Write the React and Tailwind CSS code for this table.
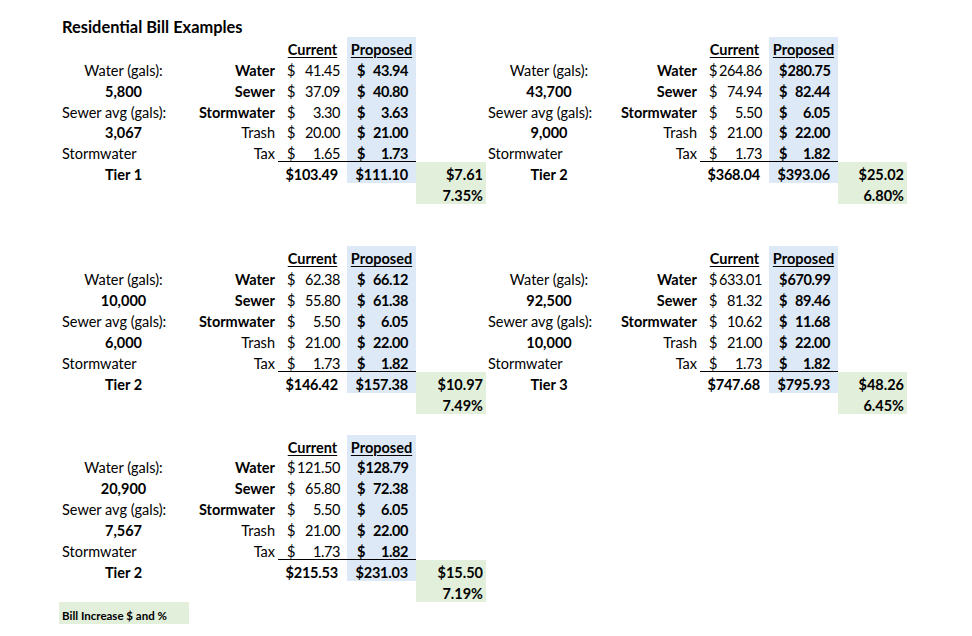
const blocks = [
  {
    water: '5,800',
    sewerAvg: '3,067',
    tier: 'Tier 1',
    rows: [
      ['41.45', '43.94'],
      ['37.09', '40.80'],
      ['3.30', '3.63'],
      ['20.00', '21.00'],
      ['1.65', '1.73'],
    ],
    total: ['$103.49', '$111.10'],
    diff: '$7.61',
    pct: '7.35%',
  },
  {
    water: '43,700',
    sewerAvg: '9,000',
    tier: 'Tier 2',
    rows: [
      ['264.86', '280.75'],
      ['74.94', '82.44'],
      ['5.50', '6.05'],
      ['21.00', '22.00'],
      ['1.73', '1.82'],
    ],
    total: ['$368.04', '$393.06'],
    diff: '$25.02',
    pct: '6.80%',
  },
  {
    water: '10,000',
    sewerAvg: '6,000',
    tier: 'Tier 2',
    rows: [
      ['62.38', '66.12'],
      ['55.80', '61.38'],
      ['5.50', '6.05'],
      ['21.00', '22.00'],
      ['1.73', '1.82'],
    ],
    total: ['$146.42', '$157.38'],
    diff: '$10.97',
    pct: '7.49%',
  },
  {
    water: '92,500',
    sewerAvg: '10,000',
    tier: 'Tier 3',
    rows: [
      ['633.01', '670.99'],
      ['81.32', '89.46'],
      ['10.62', '11.68'],
      ['21.00', '22.00'],
      ['1.73', '1.82'],
    ],
    total: ['$747.68', '$795.93'],
    diff: '$48.26',
    pct: '6.45%',
  },
  {
    water: '20,900',
    sewerAvg: '7,567',
    tier: 'Tier 2',
    rows: [
      ['121.50', '128.79'],
      ['65.80', '72.38'],
      ['5.50', '6.05'],
      ['21.00', '22.00'],
      ['1.73', '1.82'],
    ],
    total: ['$215.53', '$231.03'],
    diff: '$15.50',
    pct: '7.19%',
  },
];

const charges = [
  { label: 'Water', bold: true },
  { label: 'Sewer', bold: true },
  { label: 'Stormwater', bold: true },
  { label: 'Trash', bold: false },
  { label: 'Tax', bold: false },
];

// one spreadsheet cell, text sits near the bottom like Excel
function Cell({ className = '', children }) {
  return <div className={`h-[20.95px] leading-[26px] whitespace-nowrap ${className}`}>{children}</div>;
}

function Money({ value, className = '' }) {
  return (
    <Cell className={`flex justify-between ${className}`}>
      <span>$</span>
      <span className="tracking-[-0.4px]">{value}</span>
    </Cell>
  );
}

function Block({ data, right }) {
  const labelA = right ? 'w-[126px]' : 'w-[127px]';
  const labelB = right ? 'w-[88px]' : 'w-[91px]';
  const pctW = right ? 'w-[69px]' : 'w-[70px]';

  const colA = [
    <Cell key="h" />,
    <Cell key="w" className="text-center">Water (gals):</Cell>,
    <Cell key="wv" className="text-center font-bold">{data.water}</Cell>,
    <Cell key="s" className="pl-[2px]">Sewer avg (gals):</Cell>,
    <Cell key="sv" className="text-center font-bold">{data.sewerAvg}</Cell>,
    <Cell key="st" className="pl-[2px]">Stormwater</Cell>,
    <Cell key="t" className="text-center font-bold">{data.tier}</Cell>,
    <Cell key="p" />,
  ];

  return (
    <div className="flex">
      <div className={labelA}>{colA}</div>
      <div className={labelB}>
        <Cell />
        {charges.map((c) => (
          <Cell key={c.label} className={`text-right pr-[3px] ${c.bold ? 'font-bold' : ''}`}>
            {c.label}
          </Cell>
        ))}
        <Cell />
        <Cell />
      </div>
      <div className="w-[69px]">
        <Cell className="text-center font-bold">
          <span className="underline underline-offset-[2px]">Current</span>
        </Cell>
        {data.rows.map((r, i) => (
          <Money key={i} value={r[0]} className={`pl-[9px] pr-[7px] ${i === 4 ? 'border-b border-black' : ''}`} />
        ))}
        <Cell className="text-right font-bold pr-[9px] tracking-[-0.2px]">{data.total[0]}</Cell>
        <Cell />
      </div>
      <div className="w-[69px]">
        <Cell className="text-center font-bold bg-[#dde9f6]">
          <span className="underline underline-offset-[2px]">Proposed</span>
        </Cell>
        {data.rows.map((r, i) => (
          <Money
            key={i}
            value={r[1]}
            className={`bg-[#dde9f6] font-bold pl-[10px] pr-[8px] ${i === 4 ? 'border-b border-black' : ''}`}
          />
        ))}
        <Cell className="text-right font-bold pr-[8px] tracking-[-0.2px] bg-[#dde9f6]">{data.total[1]}</Cell>
        <Cell />
      </div>
      <div className={pctW}>
        <Cell />
        <Cell />
        <Cell />
        <Cell />
        <Cell />
        <Cell />
        <Cell className="text-right font-bold pr-[3px] bg-[#e2efda]">{data.diff}</Cell>
        <Cell className="text-right font-bold pr-[3px] bg-[#e2efda]">{data.pct}</Cell>
      </div>
    </div>
  );
}

export default function App() {
  return (
    <div className="w-[972px] h-[636px] overflow-hidden bg-white text-black font-[Lato,sans-serif] text-[14.5px] pt-[15.75px] pl-[60px]">
      <div className="h-[20.95px] leading-[22.4px] pl-[2px] text-[16.4px] font-bold">Residential Bill Examples</div>

      <div className="flex">
        <Block data={blocks[0]} />
        <Block data={blocks[1]} right />
      </div>
      <div className="h-[41.9px]" />
      <div className="flex">
        <Block data={blocks[2]} />
        <Block data={blocks[3]} right />
      </div>
      <div className="h-[20.95px]" />
      <Block data={blocks[4]} />

      <div className="-ml-[1px] w-[130px] h-[22px] bg-[#e2efda] pl-[3px] leading-[27px] text-[11.5px] font-bold">
        Bill Increase $ and %
      </div>
    </div>
  );
}
